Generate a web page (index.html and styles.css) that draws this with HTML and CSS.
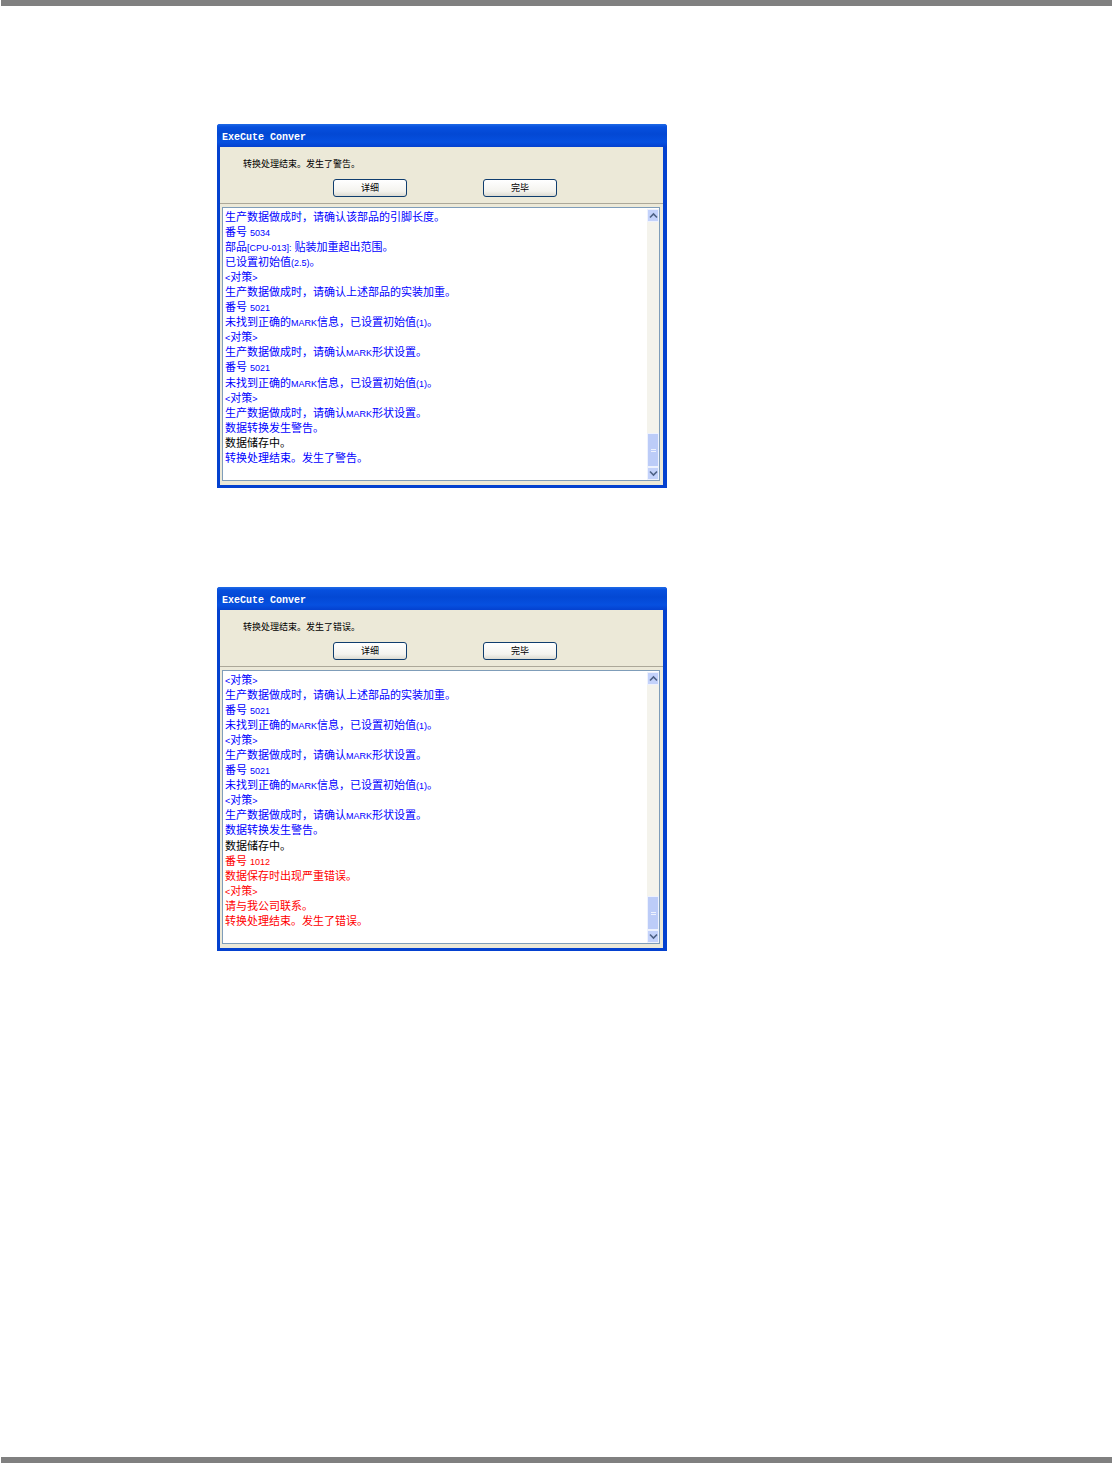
FILE: index.html
```html
<!DOCTYPE html>
<html lang="zh">
<head>
<meta charset="utf-8">
<title>ExeCute Conver</title>
<link rel="stylesheet" href="styles.css">
</head>
<body>
<div class="rule"></div>
<main class="content">
  <section class="dialog">
    <header class="titlebar">ExeCute Conver</header>
    <div class="body">
      <div class="top">
        <p class="msg">转换处理结束。发生了警告。</p>
        <div class="buttons"><button class="btn">详细</button><button class="btn">完毕</button></div>
      </div>
      <div class="logbox">
        <div class="log">
          <div class="b">生产数据做成时，请确认该部品的引脚长度。</div>
          <div class="b">番号 <small>5034</small></div>
          <div class="b">部品<small>[CPU-013]:</small> 贴装加重超出范围。</div>
          <div class="b">已设置初始值<small>(2.5)</small>。</div>
          <div class="b"><small>&lt;</small>对策<small>&gt;</small></div>
          <div class="b">生产数据做成时，请确认上述部品的实装加重。</div>
          <div class="b">番号 <small>5021</small></div>
          <div class="b">未找到正确的<small>MARK</small>信息，已设置初始值<small>(1)</small>。</div>
          <div class="b"><small>&lt;</small>对策<small>&gt;</small></div>
          <div class="b">生产数据做成时，请确认<small>MARK</small>形状设置。</div>
          <div class="b">番号 <small>5021</small></div>
          <div class="b">未找到正确的<small>MARK</small>信息，已设置初始值<small>(1)</small>。</div>
          <div class="b"><small>&lt;</small>对策<small>&gt;</small></div>
          <div class="b">生产数据做成时，请确认<small>MARK</small>形状设置。</div>
          <div class="b">数据转换发生警告。</div>
          <div class="k">数据储存中。</div>
          <div class="b">转换处理结束。发生了警告。</div>
        </div>
        <div class="scroll">
          <div class="sbtn"><svg width="9" height="7" viewBox="0 0 9 7"><path d="M1 5.5 4.5 2 8 5.5" fill="none" stroke="#4d6185" stroke-width="1.6"/></svg></div>
          <div class="track"></div>
          <div class="thumb"><i></i><i></i></div>
          <div class="sbtn"><svg width="9" height="7" viewBox="0 0 9 7"><path d="M1 1.5 4.5 5 8 1.5" fill="none" stroke="#4d6185" stroke-width="1.6"/></svg></div>
        </div>
      </div>
    </div>
  </section>
  <section class="dialog">
    <header class="titlebar">ExeCute Conver</header>
    <div class="body">
      <div class="top">
        <p class="msg">转换处理结束。发生了错误。</p>
        <div class="buttons"><button class="btn">详细</button><button class="btn">完毕</button></div>
      </div>
      <div class="logbox">
        <div class="log">
          <div class="b"><small>&lt;</small>对策<small>&gt;</small></div>
          <div class="b">生产数据做成时，请确认上述部品的实装加重。</div>
          <div class="b">番号 <small>5021</small></div>
          <div class="b">未找到正确的<small>MARK</small>信息，已设置初始值<small>(1)</small>。</div>
          <div class="b"><small>&lt;</small>对策<small>&gt;</small></div>
          <div class="b">生产数据做成时，请确认<small>MARK</small>形状设置。</div>
          <div class="b">番号 <small>5021</small></div>
          <div class="b">未找到正确的<small>MARK</small>信息，已设置初始值<small>(1)</small>。</div>
          <div class="b"><small>&lt;</small>对策<small>&gt;</small></div>
          <div class="b">生产数据做成时，请确认<small>MARK</small>形状设置。</div>
          <div class="b">数据转换发生警告。</div>
          <div class="k">数据储存中。</div>
          <div class="r">番号 <small>1012</small></div>
          <div class="r">数据保存时出现严重错误。</div>
          <div class="r"><small>&lt;</small>对策<small>&gt;</small></div>
          <div class="r">请与我公司联系。</div>
          <div class="r">转换处理结束。发生了错误。</div>
        </div>
        <div class="scroll">
          <div class="sbtn"><svg width="9" height="7" viewBox="0 0 9 7"><path d="M1 5.5 4.5 2 8 5.5" fill="none" stroke="#4d6185" stroke-width="1.6"/></svg></div>
          <div class="track"></div>
          <div class="thumb"><i></i><i></i></div>
          <div class="sbtn"><svg width="9" height="7" viewBox="0 0 9 7"><path d="M1 1.5 4.5 5 8 1.5" fill="none" stroke="#4d6185" stroke-width="1.6"/></svg></div>
        </div>
      </div>
    </div>
  </section>
</main>
<div class="rule"></div>
</body>
</html>
```
FILE: styles.css
```css
* { box-sizing: border-box; }
html, body { margin: 0; padding: 0; background: #fff; }
body {
  width: 1112px;
  height: 1463px;
  overflow: hidden;
  display: flex;
  flex-direction: column;
  font-family: "Liberation Sans", "Noto Sans CJK SC", sans-serif;
}
.rule { height: 6px; margin-left: 1px; background: #808080; flex: none; }
.content {
  flex: 1;
  padding: 118px 0 0 217px;
  display: flex;
  flex-direction: column;
  gap: 99px;
}
.dialog {
  width: 450px;
  height: 364px;
  display: flex;
  flex-direction: column;
  border-radius: 3px 3px 0 0;
  background: #0a4fdc;
  border: solid #0441cf;
  border-width: 0 4px 3px 3px;
}
.titlebar {
  height: 23px;
  margin: 0 -4px 0 -3px;
  padding: 4px 0 0 5px;
  flex: none;
  color: #fff;
  font: bold 10px/20px "Liberation Mono", monospace;
  background: linear-gradient(#1f6ae6 0, #0750de 3px, #0348d4 10px, #0650e0 18px, #0441cf 100%);
  border-radius: 3px 3px 0 0;
}
.body { flex: 1; display: flex; flex-direction: column; background: #ece9d8; padding-top: 1px; min-height: 0; }
.top { height: 56px; flex: none; border-bottom: 1px solid #aca899; }
.msg {
  margin: 0;
  padding: 10px 0 0 23px;
  height: 31px;
  font-size: 9px;
  line-height: 12px;
  color: #000;
}
.buttons { display: flex; gap: 76px; padding-left: 113px; }
.btn {
  width: 74px;
  height: 18px;
  padding: 0;
  font: 9px/14px "Liberation Sans", "Noto Sans CJK SC", sans-serif;
  color: #000;
  border: 1px solid #0f3d6e;
  border-radius: 3px;
  background: linear-gradient(#fff, #f4f3ee 70%, #dcdbd2);
}
.logbox {
  flex: 1;
  min-height: 0;
  margin: 3px 3px 4px 2px;
  display: flex;
  background: #fff;
  border: 1px solid #7f9db9;
}
.log {
  flex: 1;
  padding: 2px 0 0 2px;
  font-size: 11px;
  white-space: nowrap;
  overflow: hidden;
}
.log > div { height: 15.05px; line-height: 15px; }
.log small { font-size: 9px; line-height: 1; }
.b { color: #0000ff; }
.k { color: #000; }
.r { color: #ff0000; }
.scroll { width: 12px; margin: 1px 0 0 0; flex: none; display: flex; flex-direction: column; background: #f4f3ec; }
.sbtn {
  height: 13px;
  flex: none;
  display: flex;
  align-items: center;
  justify-content: center;
  background: #c3d2fb;
  border: 1px solid #eef2fd;
}
.track { flex: 1; }
.thumb {
  height: 34px;
  flex: none;
  display: flex;
  flex-direction: column;
  align-items: center;
  justify-content: center;
  gap: 1px;
  background: #bcccf8;
  border: 1px solid #eef2fd;
}
.thumb i { width: 5px; height: 1px; background: #eef2fd; }
```
